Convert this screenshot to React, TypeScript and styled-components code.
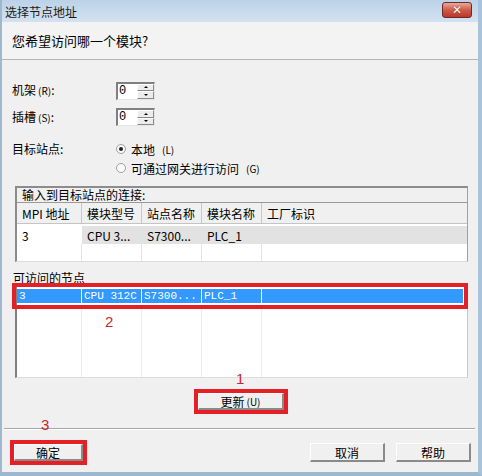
import React from "react";
import styled, { createGlobalStyle } from "styled-components";

const Global = createGlobalStyle`
  html, body { margin: 0; padding: 0; background: #f0f0f0; }
  body { font-family: "Noto Sans CJK SC", "Noto Sans", sans-serif; font-size: 12px; color: #000; }
  * { box-sizing: border-box; }
`;

const Win = styled.div`
  position: relative;
  width: 482px;
  height: 476px;
  display: flex;
  flex-direction: column;
  background: #f0f0f0;
  border-left: 2px solid #9fb8d0;
  border-right: 4px solid #a9c3dc;
  border-bottom: 4px solid #9db7cf;
  overflow: hidden;
`;

const TitleBar = styled.div`
  height: 22px;
  flex: none;
  display: flex;
  align-items: center;
  justify-content: space-between;
  padding: 0 6px 0 3px;
  background: linear-gradient(#bcd2e9, #d3e2f1);
  font-size: 12px;
  color: #1a1a1a;
`;

const CloseBtn = styled.div`
  width: 30px;
  height: 16px;
  margin-top: -2px;
  border-radius: 3px;
  border: 1px solid #6d2a25;
  background: linear-gradient(#e9a99b, #cf5a48 50%, #b9382a);
  display: flex;
  align-items: center;
  justify-content: center;
  color: #fff;
  font: bold 12px "DejaVu Sans", sans-serif;
  text-shadow: 0 0 1px #5a1a10;
`;

const Header = styled.div`
  height: 38px;
  flex: none;
  display: flex;
  align-items: center;
  padding-left: 10px;
  font-size: 13px;
  background: #f3f3f3;
  border-bottom: 1px solid #b5b5b5;
`;

const Body = styled.div`
  display: flex;
  flex-direction: column;
  padding: 22px 0 0 10px;
`;

const FormRow = styled.div<{ $h: number; $mt?: number; $top?: boolean }>`
  display: flex;
  align-items: ${(p) => (p.$top ? "flex-start" : "center")};
  height: ${(p) => p.$h}px;
  margin-top: ${(p) => p.$mt || 0}px;
`;

const Label = styled.div`
  width: 104px;
  font-size: 12px;
  line-height: 12px;
`;

const Spin = styled.div`
  display: flex;
  width: 39px;
  height: 18px;
  border-top: 2px solid #808080;
  border-left: 2px solid #808080;
  border-right: 1px solid #e6e6e6;
  border-bottom: 1px solid #e6e6e6;
  background: #fff;
`;

const SpinText = styled.div`
  flex: 1;
  font: 12px "Liberation Mono", monospace;
  line-height: 15px;
  padding-left: 1px;
`;

const SpinBtns = styled.div`
  width: 17px;
  display: flex;
  flex-direction: column;
`;

const SpinBtn = styled.div`
  flex: 1;
  background: #ececec;
  border-top: 1px solid #fff;
  border-left: 1px solid #fff;
  border-bottom: 1px solid #8a8a8a;
  border-right: 1px solid #8a8a8a;
  display: flex;
  align-items: center;
  justify-content: center;
`;

const Arrow = styled.div<{ $up?: boolean }>`
  width: 0;
  height: 0;
  border-left: 2px solid transparent;
  border-right: 2px solid transparent;
  ${(p) => (p.$up ? "border-bottom: 2px solid #000;" : "border-top: 2px solid #000;")}
`;

const RadioGroup = styled.div`
  display: flex;
  flex-direction: column;
  gap: 7px;
`;

const RadioRow = styled.div`
  display: flex;
  align-items: center;
  gap: 5px;
  height: 12px;
`;

const RadioDot = styled.div<{ $on?: boolean }>`
  width: 10px;
  height: 10px;
  border-radius: 50%;
  border: 1px solid #a0a0a0;
  background: #fafafa;
  display: flex;
  align-items: center;
  justify-content: center;
  &::after {
    content: "";
    width: 4px;
    height: 4px;
    border-radius: 50%;
    background: ${(p) => (p.$on ? "#222" : "transparent")};
  }
`;

const Small = styled.span`
  font-size: 10px;
  margin-left: 2px;
`;

const Table1 = styled.div`
  margin: 12px 0 0 3px;
  width: 453px;
  border-top: 2px solid #8c8c8c;
  border-left: 2px solid #8c8c8c;
  border-right: 1px solid #a0a0a0;
  border-bottom: 1px solid #dcdcdc;
  background: #fff;
  display: flex;
  flex-direction: column;
`;

const Caption = styled.div`
  height: 15px;
  background: #f0f0f0;
  border-bottom: 1px solid #999;
  padding-left: 5px;
  font-size: 12px;
  line-height: 14px;
`;

const Row = styled.div<{ $h: number; $bg?: string; $mt?: number }>`
  display: grid;
  grid-template-columns: 65px 60px 60px 60px 1fr;
  height: ${(p) => p.$h}px;
  margin-top: ${(p) => p.$mt || 0}px;
  background: ${(p) => p.$bg || "#fff"};
`;

const Cell = styled.div<{ $bg?: string; $line?: string; $color?: string; $mono?: boolean }>`
  display: flex;
  align-items: center;
  padding-left: ${(p) => (p.$mono ? 2 : 5)}px;
  border-right: 1px solid ${(p) => p.$line || "#e3e3e3"};
  background: ${(p) => p.$bg || "transparent"};
  color: ${(p) => p.$color || "#000"};
  font-family: ${(p) => (p.$mono ? `"Liberation Mono", "Noto Sans CJK SC", monospace` : `"Noto Sans CJK SC", sans-serif`)};
  font-size: ${(p) => (p.$mono ? 11 : 12)}px;
  white-space: nowrap;
  overflow: hidden;
  &:last-child { border-right: none; }
`;

const HeadRow = styled(Row)`
  background: #f0f0f0;
  border-bottom: 1px solid #c4c4c4;
`;

const SectionLabel = styled.div`
  margin-top: 8px;
  height: 15px;
  line-height: 15px;
  font-size: 12px;
  padding-left: 1px;
`;

const Table2 = styled.div`
  position: relative;
  margin: 1px 0 0 3px;
  width: 453px;
  height: 92px;
  background: #fff;
  border-left: 2px solid #808080;
  border-right: 1px solid #c8c8c8;
  border-bottom: 1px solid #dcdcdc;
  display: flex;
  flex-direction: column;
`;

const RedBox = styled.div`
  border: 4px solid #e41f26;
  display: flex;
  flex-direction: column;
`;

const SelBox = styled(RedBox)`
  margin: -3px -1px 0 -5px;
  padding: 2px 1px;
`;

const Empty = styled(Row)`
  flex: 1;
`;

const Note = styled.div<{ $x: number; $y: number }>`
  position: absolute;
  left: ${(p) => p.$x}px;
  top: ${(p) => p.$y}px;
  color: #c8282d;
  font: 15px "Liberation Sans", sans-serif;
`;

const Center = styled.div`
  display: flex;
  justify-content: center;
  margin-top: 11px;
  padding-right: 8px;
`;

const Button = styled.div<{ $w: number; $h?: number }>`
  width: ${(p) => p.$w}px;
  height: ${(p) => p.$h || 17}px;
  background: #f0f0f0;
  border-top: 1px solid #fff;
  border-left: 1px solid #fff;
  border-right: 2px solid #8a8a8a;
  border-bottom: 2px solid #8a8a8a;
  display: flex;
  align-items: center;
  justify-content: center;
  font-size: 12px;
`;

const Sep = styled.div`
  margin: 14px 3px 0 2px;
  height: 2px;
  border-top: 1px solid #a6a6a6;
  border-bottom: 1px solid #fff;
`;

const Footer = styled.div`
  display: flex;
  align-items: center;
  padding: 10px 7px 0 8px;
  gap: 11px;
`;

const Spacer = styled.div`
  flex: 1;
`;

const cols1 = ["MPI 地址", "模块型号", "站点名称", "模块名称", "工厂标识"];

function SpinBox() {
  return (
    <Spin>
      <SpinText>0</SpinText>
      <SpinBtns>
        <SpinBtn><Arrow $up /></SpinBtn>
        <SpinBtn><Arrow /></SpinBtn>
      </SpinBtns>
    </Spin>
  );
}

export default function App() {
  return (
    <>
      <Global />
      <Win>
        <TitleBar>
          <span>选择节点地址</span>
          <CloseBtn>✕</CloseBtn>
        </TitleBar>
        <Header>您希望访问哪一个模块?</Header>
        <Body>
          <FormRow $h={17}>
            <Label>机架<Small>(R)</Small>:</Label>
            <SpinBox />
          </FormRow>
          <FormRow $h={18} $mt={9}>
            <Label>插槽<Small>(S)</Small>:</Label>
            <SpinBox />
          </FormRow>
          <FormRow $h={31} $mt={17} $top>
            <Label>目标站点:</Label>
            <RadioGroup>
              <RadioRow><RadioDot $on />本地<Small>(L)</Small></RadioRow>
              <RadioRow><RadioDot />可通过网关进行访问<Small>(G)</Small></RadioRow>
            </RadioGroup>
          </FormRow>

          <Table1>
            <Caption>输入到目标站点的连接:</Caption>
            <HeadRow $h={21}>
              {cols1.map((c) => (
                <Cell key={c} $line="#c8c8c8">{c}</Cell>
              ))}
            </HeadRow>
            <Row $h={18} $bg="#e2e2e2" $mt={2}>
              <Cell $bg="#fff" $line="#fff">3</Cell>
              <Cell $line="#e2e2e2">CPU 3...</Cell>
              <Cell $line="#e2e2e2">S7300...</Cell>
              <Cell $line="#e2e2e2">PLC_1</Cell>
              <Cell />
            </Row>
            <Row $h={17}>
              <Cell /><Cell /><Cell /><Cell /><Cell />
            </Row>
          </Table1>

          <SectionLabel>可访问的节点</SectionLabel>
          <Table2>
            <SelBox>
              <Row $h={14} $bg="#3399ff">
                <Cell $mono $color="#fff" $line="#fff">3</Cell>
                <Cell $mono $color="#fff" $line="#fff">CPU 312C</Cell>
                <Cell $mono $color="#fff" $line="#fff">S7300...</Cell>
                <Cell $mono $color="#fff" $line="#fff">PLC_1</Cell>
                <Cell $mono $color="#fff" $line="#fff" />
              </Row>
            </SelBox>
            <Empty $h={0}>
              <Cell $line="#ececec" /><Cell $line="#ececec" /><Cell $line="#ececec" /><Cell $line="#ececec" /><Cell />
            </Empty>
            <Note $x={88} $y={27}>2</Note>
          </Table2>

          <Center>
            <RedBox>
              <Button $w={86}>更新<Small>(U)</Small></Button>
            </RedBox>
          </Center>
        </Body>
        <Sep />
        <Footer>
          <RedBox>
            <Button $w={69}>确定</Button>
          </RedBox>
          <Spacer />
          <Button $w={75} $h={19}>取消</Button>
          <Button $w={75} $h={19}>帮助</Button>
        </Footer>
        <Note $x={234} $y={370}>1</Note>
        <Note $x={39} $y={416}>3</Note>
      </Win>
    </>
  );
}
